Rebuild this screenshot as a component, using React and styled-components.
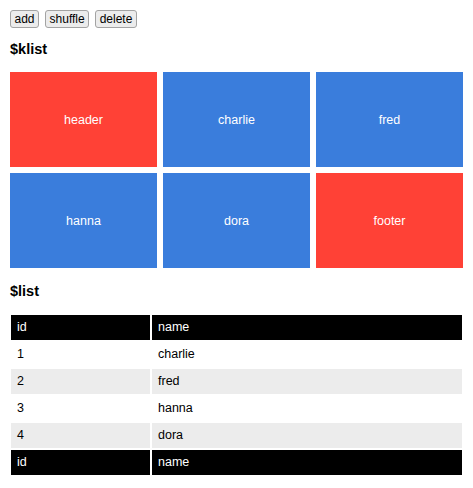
import React from "react";
import styled, { createGlobalStyle } from "styled-components";

const Global = createGlobalStyle`
  html, body { margin: 0; padding: 0; background: #fff; }
  body { font-family: "Liberation Sans", Arial, Helvetica, sans-serif; color: #000; }
`;

const Page = styled.div`
  padding: 10px;
  display: flex;
  flex-direction: column;
`;

const Toolbar = styled.div`
  display: flex;
  gap: 6px;
  height: 18px;
`;

const Button = styled.button`
  box-sizing: border-box;
  height: 18px;
  padding: 0 3.5px;
  font: 12px/16px "Liberation Sans", Arial, sans-serif;
  color: #000;
  background: #ececec;
  border: 1px solid #a3a3a3;
  border-radius: 3px;
`;

const Heading = styled.h3`
  margin: ${(p) => p.$mt}px 0 ${(p) => p.$mb}px;
  font-size: 14.5px;
  line-height: 17px;
  font-weight: bold;
`;

const Tiles = styled.div`
  display: grid;
  grid-template-columns: repeat(3, 1fr);
  grid-auto-rows: 95px;
  gap: 6px;
`;

const Tile = styled.div`
  display: flex;
  align-items: center;
  justify-content: center;
  background: ${(p) => (p.$accent ? "#ff4136" : "#3a7ddc")};
  color: #fff;
  font-size: 12.5px;
`;

const Table = styled.table`
  border-collapse: separate;
  border-spacing: 2px;
  width: calc(100% + 2px);
  margin: 0 -1px;
  table-layout: fixed;
  font-size: 12.5px;
`;

const Cell = styled.td`
  box-sizing: border-box;
  height: 25px;
  padding: 0 6px;
  text-align: left;
  font-weight: normal;
  line-height: 15px;
  width: ${(p) => (p.$first ? "139px" : "auto")};
`;

const HeadRow = styled.tr`
  background: #000;
  color: #fff;
`;

const BodyRow = styled.tr`
  background: ${(p) => (p.$alt ? "#ececec" : "#fff")};
`;

const tiles = [
  { name: "header", accent: true },
  { name: "charlie" },
  { name: "fred" },
  { name: "hanna" },
  { name: "dora" },
  { name: "footer", accent: true },
];

const list = ["charlie", "fred", "hanna", "dora"];

export default function App() {
  return (
    <>
      <Global />
      <Page>
        <Toolbar>
          <Button>add</Button>
          <Button>shuffle</Button>
          <Button>delete</Button>
        </Toolbar>
        <Heading $mt={13} $mb={14}>$klist</Heading>
        <Tiles>
          {tiles.map((t) => (
            <Tile key={t.name} $accent={t.accent}>{t.name}</Tile>
          ))}
        </Tiles>
        <Heading $mt={15} $mb={13}>$list</Heading>
        <Table>
          <thead>
            <HeadRow>
              <Cell as="th" $first>id</Cell>
              <Cell as="th">name</Cell>
            </HeadRow>
          </thead>
          <tbody>
            {list.map((n, i) => (
              <BodyRow key={n} $alt={i % 2 === 1}>
                <Cell $first>{i + 1}</Cell>
                <Cell>{n}</Cell>
              </BodyRow>
            ))}
          </tbody>
          <tfoot>
            <HeadRow>
              <Cell as="th" $first>id</Cell>
              <Cell as="th">name</Cell>
            </HeadRow>
          </tfoot>
        </Table>
      </Page>
    </>
  );
}
